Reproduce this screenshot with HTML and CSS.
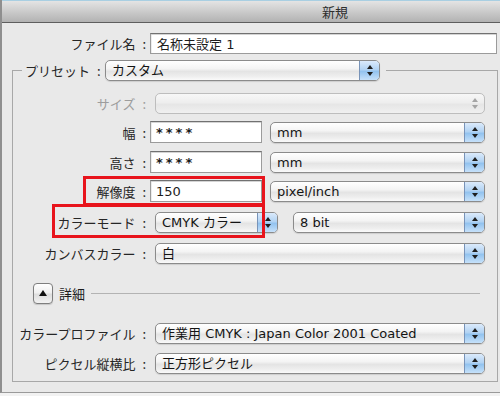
FILE: index.html
```html
<!DOCTYPE html>
<html lang="ja">
<head>
<meta charset="utf-8">
<title>新規</title>
<link rel="stylesheet" href="styles.css">
</head>
<body>
<div class="window">
  <div class="titlebar"><span class="title">新規</span></div>
  <div class="content">
    <div class="name-row">
      <span class="lbl lbl-name">ファイル名 :</span>
      <div class="field field-name">名称未設定 1</div>
    </div>
    <fieldset class="group">
      <legend class="legend">
        <span class="lbl-legend">プリセット :</span>
        <div class="popup w-preset"><span class="ptext">カスタム</span><span class="stepper"></span></div>
      </legend>
      <div class="rows">
        <div class="row">
          <span class="lbl dim">サイズ :</span>
          <div class="popup popup-off w-full"><span class="ptext"></span><span class="stepper"></span></div>
        </div>
        <div class="row r-tight">
          <span class="lbl">幅 :</span>
          <div class="field field-num"><span class="stars">****</span></div>
          <div class="popup w-unit"><span class="ptext">mm</span><span class="stepper"></span></div>
        </div>
        <div class="row">
          <span class="lbl">高さ :</span>
          <div class="field field-num"><span class="stars">****</span></div>
          <div class="popup w-unit"><span class="ptext">mm</span><span class="stepper"></span></div>
        </div>
        <div class="row r-tight">
          <span class="lbl">解像度 :</span>
          <div class="field field-num">150</div>
          <div class="popup w-unit"><span class="ptext">pixel/inch</span><span class="stepper"></span></div>
        </div>
        <div class="row r-loose">
          <span class="lbl">カラーモード :</span>
          <div class="popup w-mode"><span class="ptext">CMYK カラー</span><span class="stepper"></span></div>
          <div class="popup w-bit"><span class="ptext">8 bit</span><span class="stepper"></span></div>
        </div>
        <div class="row r-loose">
          <span class="lbl">カンバスカラー :</span>
          <div class="popup w-full"><span class="ptext">白</span><span class="stepper"></span></div>
        </div>
        <div class="row r-gap">
          <div class="disclose"><span class="tri-up"></span></div>
          <span class="disclose-label">詳細</span>
          <span class="rule"></span>
        </div>
        <div class="row r-gap">
          <span class="lbl">カラープロファイル :</span>
          <div class="popup w-full"><span class="ptext">作業用 CMYK : Japan Color 2001 Coated</span><span class="stepper"></span></div>
        </div>
        <div class="row">
          <span class="lbl">ピクセル縦横比 :</span>
          <div class="popup w-full"><span class="ptext">正方形ピクセル</span><span class="stepper"></span></div>
        </div>
      </div>
    </fieldset>
    <div class="mark mark-res"></div>
    <div class="mark mark-mode"></div>
  </div>
</div>
</body>
</html>
```

FILE: styles.css
```css
html, body {
  margin: 0;
  padding: 0;
}
body {
  width: 500px;
  height: 396px;
  overflow: hidden;
  background: #f2f2f2;
  font-family: "DejaVu Sans", "Noto Sans CJK JP", sans-serif;
  font-size: 13px;
  color: #1c1c1c;
}
.window {
  height: 393px;
  box-sizing: border-box;
  border-left: 2px solid #8f8f8f;
  border-bottom: 1px solid #9a9a9a;
  background: #e9e9e9;
}
.titlebar {
  height: 23px;
  box-sizing: border-box;
  border-top: 1px solid #a9cfe2;
  border-bottom: 1px solid #5e5e5e;
  background: linear-gradient(#e4e4e4, #c6c6c6 60%, #b2b2b2);
  display: flex;
  align-items: center;
  padding-left: 320px;
}
.title {
  font-family: "Noto Sans CJK JP", sans-serif;
  font-size: 13px;
  color: #2e2e2e;
}
.content {
  position: relative;
  padding-top: 10px;
}
.name-row {
  display: flex;
  align-items: center;
  height: 21px;
}
.lbl {
  box-sizing: border-box;
  text-align: right;
  white-space: nowrap;
  padding-right: 1px;
  word-spacing: 4px;
  font-family: "Noto Sans CJK JP", sans-serif;
  color: #262626;
}
.lbl-name {
  width: 145px;
}
.field {
  box-sizing: border-box;
  height: 22px;
  background: #fff;
  border: 1px solid #9b9b9b;
  border-top-color: #717171;
  box-shadow: inset 0 1px 0 #d4d4d4, inset 1px 0 0 #ececec;
  display: flex;
  align-items: center;
  padding-left: 6px;
  white-space: nowrap;
}
.field-name {
  width: 347px;
  height: 21px;
  margin-left: 3px;
  font-family: "DejaVu Sans", "Noto Sans CJK JP", sans-serif;
}
.field-num {
  width: 112px;
  margin-left: 3px;
  padding-left: 5px;
}
.stars {
  letter-spacing: 3px;
  font-weight: bold;
  font-size: 13px;
}
.group {
  margin: 6px 0 0 10px;
  width: 486px;
  box-sizing: border-box;
  padding: 0;
  border: 1px solid #a8a8a8;
  min-inline-size: 0;
}
.legend {
  margin-left: 9px;
  padding: 0 6px 0 3px;
  display: flex;
  align-items: center;
}
.lbl-legend {
  width: 72px;
  text-align: right;
  white-space: nowrap;
  word-spacing: 4px;
  font-family: "Noto Sans CJK JP", sans-serif;
  color: #262626;
}
.rows {
  display: flex;
  flex-direction: column;
  gap: 8px;
  padding: 11px 0 7px;
}
.row {
  display: flex;
  align-items: center;
  height: 22px;
}
.row > .lbl {
  width: 134px;
}
.r-tight { margin-top: -1px; }
.r-loose { margin-top: 1px; }
.r-gap { margin-top: 10px; }
.lbl.dim {
  color: #9d9d9d;
}
.popup {
  box-sizing: border-box;
  height: 21px;
  display: flex;
  border: 1px solid #8b8b8b;
  border-radius: 5px;
  background: linear-gradient(#ffffff 0%, #f4f4f4 40%, #e4e4e4 55%, #eeeeee 80%, #fafafa 100%);
  box-shadow: 0 1px 1px rgba(0, 0, 0, 0.12);
  overflow: hidden;
  margin-left: 8px;
}
.ptext {
  flex: 1;
  padding-left: 6px;
  line-height: 19px;
  white-space: nowrap;
  overflow: hidden;
  color: #141414;
}
.stepper {
  width: 19px;
  flex: none;
  border-left: 1px solid #7893b8;
  background: linear-gradient(#dbeafb, #b2d3f3 45%, #93c3ef 55%, #c6e1fa);
  display: flex;
  flex-direction: column;
  align-items: center;
  justify-content: center;
  gap: 3px;
}
.stepper::before,
.stepper::after {
  content: "";
  width: 0;
  height: 0;
  border-left: 3px solid transparent;
  border-right: 3px solid transparent;
}
.stepper::before {
  border-bottom: 4px solid #1e1e1e;
}
.stepper::after {
  border-top: 4px solid #1e1e1e;
}
.popup-off {
  border-color: #bdbdbd;
  background: linear-gradient(#f7f7f7, #eeeeee 45%, #e6e6e6 55%, #f0f0f0);
  box-shadow: none;
}
.popup-off .stepper {
  background: none;
  border-left: none;
}
.popup-off .stepper::before { border-bottom-color: #a4a4a4; }
.popup-off .stepper::after { border-top-color: #a4a4a4; }
.w-preset { width: 275px; }
.w-full { width: 330px; }
.w-unit { width: 215px; }
.w-mode { width: 123px; }
.popup.w-bit { width: 192px; margin-left: 15px; }
.disclose {
  box-sizing: border-box;
  width: 20px;
  height: 21px;
  margin-left: 20px;
  border: 1px solid #7e7e7e;
  border-radius: 4px;
  background: linear-gradient(#ffffff, #f0f0f0 45%, #dedede 55%, #f2f2f2);
  box-shadow: 0 1px 1px rgba(0, 0, 0, 0.15);
  display: flex;
  align-items: center;
  justify-content: center;
}
.tri-up {
  width: 0;
  height: 0;
  border-left: 4px solid transparent;
  border-right: 4px solid transparent;
  border-bottom: 6px solid #111;
}
.disclose-label {
  margin-left: 6px;
  font-family: "Noto Sans CJK JP", sans-serif;
}
.rule {
  flex: 1;
  height: 1px;
  background: #b3b3b3;
  margin: 0 17px 0 6px;
}
.mark {
  position: absolute;
  box-sizing: border-box;
  border: 3px solid #e8141c;
}
.mark-res {
  left: 81px;
  top: 153px;
  width: 182px;
  height: 30px;
}
.mark-mode {
  left: 50px;
  top: 181px;
  width: 213px;
  height: 34px;
}
```
